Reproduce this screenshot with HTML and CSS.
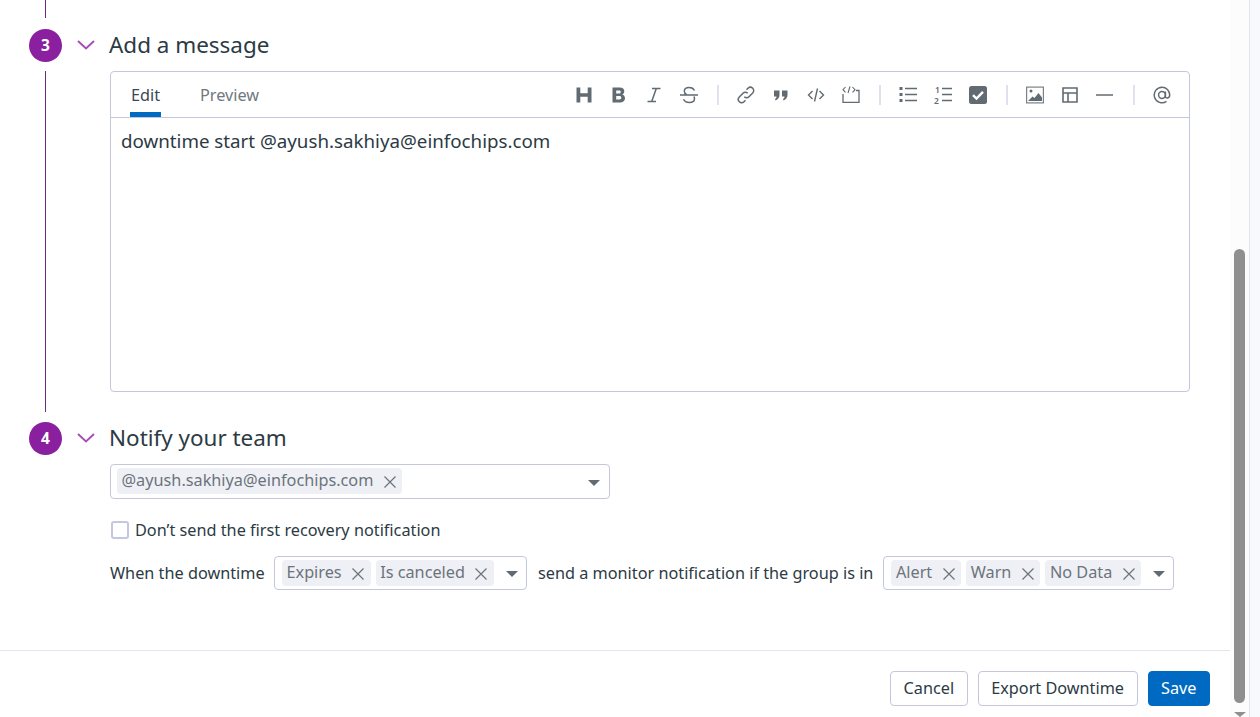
FILE: index.html
```html
<!DOCTYPE html>
<html lang="en">
<head>
<meta charset="utf-8">
<title>Schedule Downtime</title>
<link rel="stylesheet" href="styles.css">
</head>
<body>
<div class="shell">
  <main class="panel">
    <div class="scroll">
      <div class="lead-line"></div>

      <section class="step step-message">
        <div class="rail"><span class="badge">3</span><span class="rail-line"></span></div>
        <div class="step-main">
          <header class="step-head">
            <svg class="chev" width="18" height="10" viewBox="0 0 18 10"><path d="M1 1l8 7.500L17 1" fill="none" stroke="#a64fb8" stroke-width="2"/></svg>
            <h2>Add a message</h2>
          </header>
          <div class="editor">
            <div class="editor-bar">
              <div class="tabs">
                <span class="tab active">Edit</span>
                <span class="tab">Preview</span>
              </div>
              <div class="tools">
                <svg class="ic" viewBox="0 0 18 18"><path d="M1.500 1.500h3.800v5.700h7.400V1.500h3.800v15h-3.800v-5.800H5.300v5.800H1.500z" fill="#626b72"/></svg>
                <svg class="ic" viewBox="0 0 18 18"><path fill-rule="evenodd" d="M2.500 1.500h7.300c2.900 0 4.500 1.500 4.500 3.800 0 1.600-.8 2.700-2.100 3.300 1.700.5 2.800 1.800 2.800 3.700 0 2.700-1.900 4.200-4.900 4.200H2.500zm3.700 3v2.900h2.900c1 0 1.600-.5 1.600-1.500s-.6-1.400-1.600-1.400zm0 5.600v3.400h3.200c1.200 0 1.900-.6 1.900-1.700s-.7-1.700-1.900-1.700z" fill="#626b72"/></svg>
                <svg class="ic" viewBox="0 0 18 18"><path d="M7 2.500h8.500M2.500 15.500H11M11.300 2.500L6.700 15.500" fill="none" stroke="#626b72" stroke-width="1.500"/></svg>
                <svg class="ic" viewBox="0 0 18 18"><path d="M0 9h18M14.500 4.500C13.500 2.500 11.500 1.500 9.200 1.500 6.500 1.500 4.300 2.900 4.300 5.300c0 1.400.8 2.500 2.300 3.200M13.800 10.500c.5.600.7 1.200.7 2 0 2.500-2.300 4-5.200 4-2.700 0-4.800-1-5.800-3.200" fill="none" stroke="#626b72" stroke-width="1.500"/></svg>
                <span class="sep"></span>
                <svg class="ic" viewBox="0 0 18 18"><path d="M7.300 10.700a3.300 3.300 0 0 0 4.700 0l3.700-3.700A3.300 3.300 0 0 0 11 2.300L9.500 3.800M10.700 7.300a3.300 3.300 0 0 0-4.700 0L2.300 11A3.300 3.300 0 0 0 7 15.700l1.500-1.500" fill="none" stroke="#626b72" stroke-width="1.500"/></svg>
                <svg class="ic" viewBox="0 0 18 18"><path d="M2 4.500h5.500V9c0 2.500-1.500 4.500-4 5.500L3 13c1-.5 1.500-1.500 1.500-2.500H2zM10 4.500h5.500V9c0 2.500-1.500 4.500-4 5.500L11 13c1-.5 1.500-1.500 1.500-2.500H10z" fill="#626b72"/></svg>
                <svg class="ic" viewBox="0 0 18 18"><path d="M5.500 5L1.500 9l4 4M12.500 5l4 4-4 4M10.500 2.500l-3 13" fill="none" stroke="#626b72" stroke-width="1.400"/></svg>
                <svg class="ic" viewBox="0 0 18 18"><path d="M1 8v8.300h16V4.500h-3" fill="none" stroke="#626b72" stroke-width="1.300"/><path d="M3.500 1L1 3.700l2.500 2.700M10.500 1L13 3.700l-2.500 2.700M8 .5L6 7" fill="none" stroke="#626b72" stroke-width="1.100"/></svg>
                <span class="sep"></span>
                <svg class="ic" viewBox="0 0 18 18"><path d="M6 2.500h12M6 8.500h12M6 14.500h12" stroke="#626b72" stroke-width="1.500"/><path d="M.5 1h3v3h-3zM.5 7h3v3h-3zM.5 13h3v3h-3z" fill="#626b72"/></svg>
                <svg class="ic ic-ol" viewBox="0 0 18 18"><path d="M8 2.500h10M8 8.500h10M8 14.500h10" stroke="#626b72" stroke-width="1.500"/><text class="ol-num" x="1" y="7">1</text><text class="ol-num" x="0" y="17.500">2</text></svg>
                <svg class="ic" viewBox="0 0 18 18"><rect x="0" y="0" width="18" height="18" rx="2.500" fill="#626b72"/><path d="M4 9.200l3.500 3.400L14 5.800" fill="none" stroke="#fff" stroke-width="2.400"/></svg>
                <span class="sep"></span>
                <svg class="ic" viewBox="0 0 18 18"><rect x=".6" y="1.100" width="16.800" height="15.800" fill="none" stroke="#7a8288" stroke-width="1.200"/><circle cx="5" cy="5" r="1.500" fill="#626b72"/><path d="M2 15l4.500-4.500 2 1.500L12.500 7 16 11.500V15z" fill="#626b72"/></svg>
                <svg class="ic" viewBox="0 0 18 18"><path d="M2 2h14v14H2zM2 7h14M7 7v9" fill="none" stroke="#626b72" stroke-width="1.600"/></svg>
                <svg class="ic" viewBox="0 0 18 18"><path d="M0 9h17" stroke="#626b72" stroke-width="1.500"/></svg>
                <span class="sep"></span>
                <svg class="ic" viewBox="0 0 18 18"><circle cx="9" cy="9" r="3.400" fill="none" stroke="#626b72" stroke-width="1.500"/><path d="M12.400 5.600v4.800c0 2.500 4.300 2.200 4.300-1.400C16.700 4.500 13.200 1.200 9 1.200A7.800 7.800 0 1 0 13.500 15.400" fill="none" stroke="#626b72" stroke-width="1.500"/></svg>
              </div>
            </div>
            <div class="editor-text">downtime start @ayush.sakhiya@einfochips.com</div>
          </div>
        </div>
      </section>

      <section class="step step-notify">
        <div class="rail"><span class="badge">4</span></div>
        <div class="step-main">
          <header class="step-head">
            <svg class="chev" width="18" height="10" viewBox="0 0 18 10"><path d="M1 1l8 7.500L17 1" fill="none" stroke="#a64fb8" stroke-width="2"/></svg>
            <h2>Notify your team</h2>
          </header>
          <div class="notify-body">
            <div class="select select-wide">
              <span class="chip">@ayush.sakhiya@einfochips.com<svg class="x" viewBox="0 0 12 12"><path d="M.5.500l11 11M11.500.500l-11 11"/></svg></span>
              <span class="caret"></span>
            </div>
            <label class="check"><span class="box"></span>Don’t send the first recovery notification</label>
            <div class="sentence">
              <span class="lead-text">When the downtime</span>
              <div class="select">
                <span class="chip">Expires<svg class="x" viewBox="0 0 12 12"><path d="M.5.500l11 11M11.500.500l-11 11"/></svg></span>
                <span class="chip">Is canceled<svg class="x" viewBox="0 0 12 12"><path d="M.5.500l11 11M11.500.500l-11 11"/></svg></span>
                <span class="caret"></span>
              </div>
              <span class="mid-text">send a monitor notification if the group is in</span>
              <div class="select">
                <span class="chip">Alert<svg class="x" viewBox="0 0 12 12"><path d="M.5.500l11 11M11.500.500l-11 11"/></svg></span>
                <span class="chip">Warn<svg class="x" viewBox="0 0 12 12"><path d="M.5.500l11 11M11.500.500l-11 11"/></svg></span>
                <span class="chip">No Data<svg class="x" viewBox="0 0 12 12"><path d="M.5.500l11 11M11.500.500l-11 11"/></svg></span>
                <span class="caret"></span>
              </div>
            </div>
          </div>
        </div>
      </section>
    </div>
    <footer class="footer">
      <button class="btn">Cancel</button>
      <button class="btn">Export Downtime</button>
      <button class="btn primary">Save</button>
    </footer>
  </main>
  <div class="scrollbar">
    <div class="thumb"></div>
    <div class="arrow"></div>
  </div>
  <div class="backdrop"></div>
</div>
</body>
</html>
```

FILE: styles.css
```css
* { box-sizing: border-box; }
html, body { margin: 0; height: 100%; overflow: hidden; }
body {
  font-family: "Noto Sans", sans-serif;
  color: #2c3a44;
  background: #fff;
}
.shell { display: flex; width: 1260px; height: 717px; }
.panel { width: 1230px; display: flex; flex-direction: column; }
.scroll { flex: 1; padding-left: 29px; }
.lead-line { width: 1px; height: 18px; margin: 0 0 11px 16px; background: #6f2a82; }

.step { display: flex; }
.step-message { height: 383px; }
.step-notify { margin-top: 10px; }
.rail { width: 33px; display: flex; flex-direction: column; align-items: center; flex: none; }
.badge {
  width: 33px; height: 33px; border-radius: 50%;
  background: #8a1fa0; color: #fff;
  font-size: 15.500px; font-weight: 700; line-height: 1;
  display: flex; align-items: center; justify-content: center;
  flex: none;
}
.rail-line { flex: 1; width: 1px; margin-top: 9px; background: #6f2a82; }
.step-main { margin-left: 15px; flex: 1; }
.step-head { display: flex; align-items: center; height: 33px; }
.chev { flex: none; margin-right: 14px; margin-bottom: 1px; }
.step-head h2 {
  margin: 0 0 2px; font-size: 22.450px; font-weight: 400; line-height: 31px; color: #2c3a44;
}

.editor {
  margin: 9px 0 0 33px; width: 1080px; height: 321px;
  border: 1px solid #c3c8de; border-radius: 4px;
}
.editor-bar {
  display: flex; justify-content: space-between; align-items: stretch;
  height: 46px; border-bottom: 1px solid #c3c8de;
}
.tabs { display: flex; gap: 38px; padding-left: 19px; }
.tab { font-size: 16.250px; line-height: 47px; color: #6f7880; height: 45px; padding: 0 1px; }
.tab.active { color: #3b4852; border-bottom: 5px solid #0069c2; width: 31px; }
.tools { display: flex; align-items: center; padding-right: 18px; padding-top: 1px; }
.ic { width: 18px; height: 18px; margin-left: 17px; flex: none; }
.ic-ol { overflow: visible; }
.sep { width: 2px; height: 20px; background: #dfe2ee; margin-left: 19px; margin-right: 1px; }
.ol-num { font-size: 8.500px; font-family: "Noto Sans", sans-serif; font-weight: 600; fill: #626b72; }
.editor-text { padding: 9px 10px; font-size: 18.740px; line-height: 28px; color: #2c3a44; }

.notify-body { margin: 9px 0 0 33px; }
.select {
  display: inline-flex; align-items: center; gap: 5px;
  height: 34px; padding: 0 7px;
  border: 1px solid #c3c8de; border-radius: 4px; background: #fff;
}
.select-wide { width: 500px; height: 35px; display: flex; padding: 0 6px; }
.select-wide .chip { margin-bottom: 1px; }
.chip {
  display: inline-flex; align-items: center; height: 26px;
  padding: 0 6.500px 2px 4.500px; background: #eff0f5; border-radius: 4px;
  font-size: 16.250px; color: #6b747c; white-space: nowrap;
}
.x { width: 12px; height: 12px; margin: 3px 0 0 10.500px; flex: none; }
.x path { fill: none; stroke: #6b747c; stroke-width: 1.200; }
.caret {
  width: 0; height: 0; margin-left: auto; margin-right: 3px; margin-top: 2px;
  border-left: 6px solid transparent; border-right: 6px solid transparent;
  border-top: 6px solid #626b72;
}
.sentence .caret { margin-left: 7px; margin-right: 1px; }
.check {
  display: flex; align-items: center; margin: 12px 0 0 1px; height: 38px;
  font-size: 16.250px; line-height: 24px; color: #2c3a44;
}
.box {
  width: 18px; height: 18px; margin-right: 6px; flex: none;
  border: 2px solid #c3c8de; border-radius: 3px; background: #fff;
}
.sentence {
  display: flex; align-items: center; gap: 10px; margin-top: 7px;
  font-size: 16.250px; white-space: nowrap;
}
.lead-text { width: 154px; flex: none; }
.mid-text { margin-left: 1px; }

.footer {
  height: 67px; flex: none;
  border-top: 1px solid #e2e4ee;
  display: flex; justify-content: flex-end; align-items: flex-start;
  gap: 10px; padding: 20px 20px 0 0;
}
.btn {
  height: 35px; padding: 0 12.500px 2px;
  border: 1px solid #c3c8de; border-radius: 4px; background: #fff;
  font: 16.250px "Noto Sans", sans-serif; color: #2c3a44;
}
.btn.primary { background: #0069c2; border-color: #0069c2; color: #fff; }

.scrollbar {
  width: 19px; flex: none; background: #fcfcfc;
  display: flex; flex-direction: column; align-items: center;
  padding-top: 249px;
}
.thumb { width: 11px; height: 454px; background: #8f8f8f; border-radius: 6px; flex: none; }
.arrow {
  margin-top: 9px; width: 0; height: 0;
  border-left: 6px solid transparent; border-right: 6px solid transparent;
  border-top: 5px solid #8f8f8f;
}
.backdrop { flex: 1; border-left: 1px solid #e2e4ee; background: #f8f9fc; }
```
